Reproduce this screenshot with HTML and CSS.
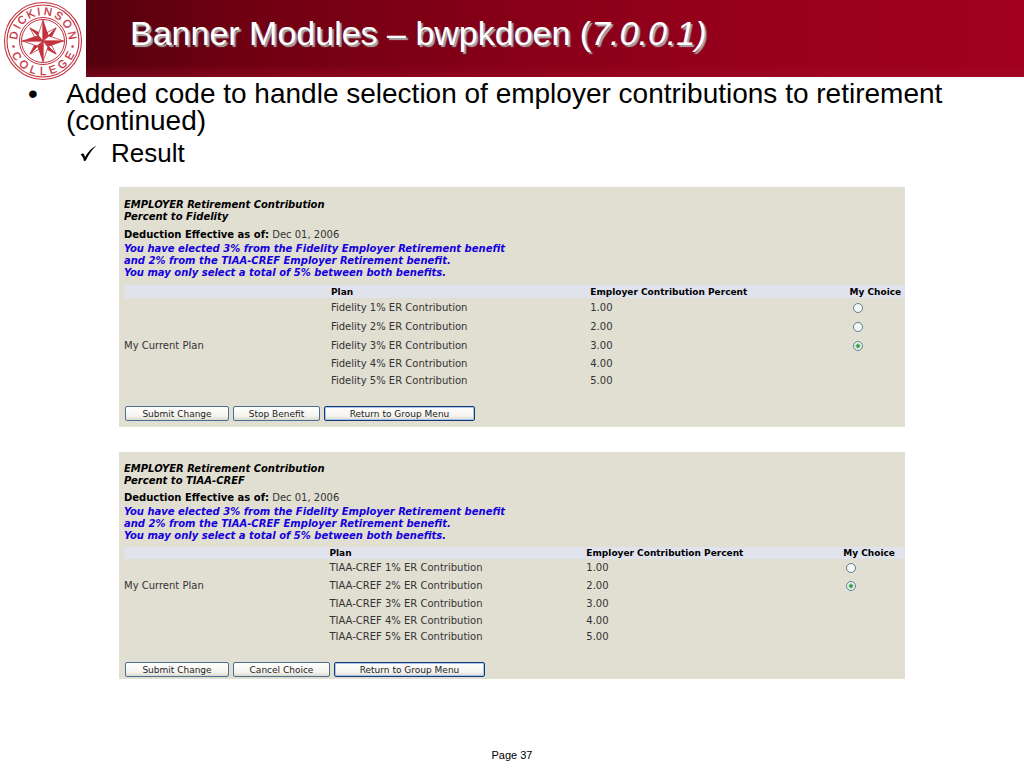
FILE: index.html
```html
<!DOCTYPE html>
<html lang="en">
<head>
<meta charset="utf-8">
<title>Banner Modules – bwpkdoen</title>
<link rel="stylesheet" href="styles.css">
</head>
<body>
<div class="slide">
  <header class="header">
    <div class="brand">
      <svg class="logo" viewBox="0 0 86 82" role="img" aria-label="Dickinson College">
        <defs>
          <g id="ray-long">
            <path d="M0 -20.500 L0 0 L-5 -6 Z" fill="#fff"/>
            <path d="M0 -20.500 L0 0 L5 -6 Z" fill="#c4303c"/>
          </g>
          <g id="ray-short">
            <path d="M0 -18.500 L0 0 L-4 -6 Z" fill="#fff"/>
            <path d="M0 -18.500 L0 0 L4 -6 Z" fill="#c4303c"/>
          </g>
        </defs>
        <g fill="none" stroke="#c4303c">
          <circle cx="43" cy="41" r="38.5" stroke-width="1.1"/>
          <circle cx="43" cy="41" r="36" stroke-width="1.1"/>
          <circle cx="43" cy="41" r="23.500" stroke-width="1"/>
          <circle cx="43" cy="41" r="21.500" stroke-width="1"/>
        </g>
        <g stroke="#c4303c" stroke-width=".8" stroke-linejoin="round" transform="translate(43 41)">
          <use href="#ray-short" transform="rotate(45)"/>
          <use href="#ray-short" transform="rotate(135)"/>
          <use href="#ray-short" transform="rotate(225)"/>
          <use href="#ray-short" transform="rotate(315)"/>
          <use href="#ray-long"/>
          <use href="#ray-long" transform="rotate(90)"/>
          <use href="#ray-long" transform="rotate(180)"/>
          <use href="#ray-long" transform="rotate(270)"/>
        </g>
        <g class="seal" transform="translate(43 41)">
          <text y="-26" transform="rotate(-79)">D</text>
          <text y="-26" transform="rotate(-61)">I</text>
          <text y="-26" transform="rotate(-45)">C</text>
          <text y="-26" transform="rotate(-25)">K</text>
          <text y="-26" transform="rotate(-8)">I</text>
          <text y="-26" transform="rotate(10)">N</text>
          <text y="-26" transform="rotate(32)">S</text>
          <text y="-26" transform="rotate(55)">O</text>
          <text y="-26" transform="rotate(79)">N</text>
          <text y="34" transform="rotate(60)">C</text>
          <text y="34" transform="rotate(39)">O</text>
          <text y="34" transform="rotate(19)">L</text>
          <text y="34" transform="rotate(0)">L</text>
          <text y="34" transform="rotate(-19)">E</text>
          <text y="34" transform="rotate(-40)">G</text>
          <text y="34" transform="rotate(-61)">E</text>
        </g>
        <circle cx="13.500" cy="46.500" r="1.200" fill="#c4303c"/>
        <circle cx="72.500" cy="46.500" r="1.200" fill="#c4303c"/>
      </svg>
    </div>
    <h1 class="title">Banner Modules – bwpkdoen (<em>7.0.0.1)</em></h1>
  </header>

  <main class="content">
    <ul class="points">
      <li class="point">
        <span class="bullet">•</span>
        <span>Added code to handle selection of employer contributions to retirement (continued)</span>
      </li>
      <li class="subpoint">
        <svg class="check" viewBox="0 0 17 17" aria-hidden="true"><path d="M.5 9.500 L3 8.300 Q4.500 9.500 5 12.200 Q9 4.500 16.500 .5 Q10 6.500 5.800 15.500 L4 16.200 Q3 11 .5 9.500 Z"/></svg>
        <span>Result</span>
      </li>
    </ul>

    <form class="panel">
      <h2 class="heading">EMPLOYER Retirement Contribution<br>Percent to Fidelity</h2>
      <p class="effective"><b>Deduction Effective as of:</b> Dec 01, 2006</p>
      <p class="note">You have elected 3% from the Fidelity Employer Retirement benefit<br>and 2% from the TIAA-CREF Employer Retirement benefit.<br>You may only select a total of 5% between both benefits.</p>
      <table class="plans">
        <colgroup><col class="col-current"><col class="col-plan"><col class="col-percent"><col></colgroup>
        <thead><tr><th></th><th>Plan</th><th>Employer Contribution Percent</th><th>My Choice</th></tr></thead>
        <tbody>
          <tr class="tall"><td></td><td>Fidelity 1% ER Contribution</td><td>1.00</td><td><input type="radio" name="fidelity" aria-label="Fidelity 1%"></td></tr>
          <tr class="tall"><td></td><td>Fidelity 2% ER Contribution</td><td>2.00</td><td><input type="radio" name="fidelity" aria-label="Fidelity 2%"></td></tr>
          <tr class="tall"><td>My Current Plan</td><td>Fidelity 3% ER Contribution</td><td>3.00</td><td><input type="radio" name="fidelity" aria-label="Fidelity 3%" checked></td></tr>
          <tr><td></td><td>Fidelity 4% ER Contribution</td><td>4.00</td><td></td></tr>
          <tr><td></td><td>Fidelity 5% ER Contribution</td><td>5.00</td><td></td></tr>
        </tbody>
      </table>
      <div class="actions">
        <button type="button" class="btn submit">Submit Change</button>
        <button type="button" class="btn stop">Stop Benefit</button>
        <button type="button" class="btn return">Return to Group Menu</button>
      </div>
    </form>

    <form class="panel compact">
      <h2 class="heading">EMPLOYER Retirement Contribution<br>Percent to TIAA-CREF</h2>
      <p class="effective"><b>Deduction Effective as of:</b> Dec 01, 2006</p>
      <p class="note">You have elected 3% from the Fidelity Employer Retirement benefit<br>and 2% from the TIAA-CREF Employer Retirement benefit.<br>You may only select a total of 5% between both benefits.</p>
      <table class="plans">
        <colgroup><col class="col-current"><col class="col-plan"><col class="col-percent"><col></colgroup>
        <thead><tr><th></th><th>Plan</th><th>Employer Contribution Percent</th><th>My Choice</th></tr></thead>
        <tbody>
          <tr class="tall"><td></td><td>TIAA-CREF 1% ER Contribution</td><td>1.00</td><td><input type="radio" name="tiaa" aria-label="TIAA-CREF 1%"></td></tr>
          <tr class="tall"><td>My Current Plan</td><td>TIAA-CREF 2% ER Contribution</td><td>2.00</td><td><input type="radio" name="tiaa" aria-label="TIAA-CREF 2%" checked></td></tr>
          <tr class="tall"><td></td><td>TIAA-CREF 3% ER Contribution</td><td>3.00</td><td></td></tr>
          <tr><td></td><td>TIAA-CREF 4% ER Contribution</td><td>4.00</td><td></td></tr>
          <tr><td></td><td>TIAA-CREF 5% ER Contribution</td><td>5.00</td><td></td></tr>
        </tbody>
      </table>
      <div class="actions">
        <button type="button" class="btn submit">Submit Change</button>
        <button type="button" class="btn cancel">Cancel Choice</button>
        <button type="button" class="btn return">Return to Group Menu</button>
      </div>
    </form>
  </main>

  <footer class="footer">Page 37</footer>
</div>
</body>
</html>
```
FILE: styles.css
```css
* { box-sizing: border-box; }

body {
  margin: 0;
  background: #fff;
  color: #000;
  font-family: "Liberation Sans", Arial, sans-serif;
}

.slide {
  display: flex;
  flex-direction: column;
  min-height: 100vh;
}

.header {
  display: flex;
  height: 77px;
}

.brand { flex: none; width: 86px; }

.logo { display: block; width: 86px; height: 82px; }

.seal {
  fill: #c4303c;
  stroke: #c4303c;
  stroke-width: .3px;
  font-family: "Liberation Sans", Arial, sans-serif;
  font-size: 11px;
  text-anchor: middle;
}

.title {
  flex: 1;
  margin: 0;
  padding: 13px 0 0 44px;
  background:
    linear-gradient(to bottom, transparent 64px, #a5122a66 77px),
    linear-gradient(to right, #54000e 0, #700012 160px, #8a0018 470px, #9c001c 750px, #a0001d 100%);
  color: #fff;
  font-size: 34px;
  font-weight: 400;
  line-height: 40px;
  text-shadow: 2px 2px 1px #aaa;
}

.content { flex: 1; }

.points {
  margin: 0;
  padding: 3px 28px 0;
  list-style: none;
}

.point {
  display: flex;
  font-size: 28px;
  line-height: 27px;
}

.bullet { flex: none; width: 38px; }

.subpoint {
  display: flex;
  align-items: center;
  gap: 14px;
  margin-top: 4px;
  padding-left: 52px;
  font-size: 26px;
  line-height: 30px;
}

.check { width: 17px; height: 17px; }

.panel {
  --tall-row: 19px;
  --short-row: 17px;
  --head-row: 13px;
  margin: 19px 119px 0;
  padding: 12px 0 6px 5px;
  background: #e1dfd2;
  color: #333;
  font-family: "DejaVu Sans", Verdana, sans-serif;
  font-size: 10px;
  line-height: 12px;
}

.heading {
  margin: 0 0 6px;
  color: #000;
  font-size: 10px;
  font-style: italic;
  line-height: 12px;
}

.effective { margin: 0 0 2px; }

.effective b { color: #000; }

.note {
  margin: 0 0 6px;
  color: #1400e0;
  font-style: italic;
  font-weight: 700;
}

.plans {
  width: 100%;
  table-layout: fixed;
  border-collapse: collapse;
}

.col-current { width: 26.5%; }
.col-plan, .col-percent { width: 33.2%; }

.plans th, .plans td {
  padding: 0;
  height: var(--short-row);
  line-height: 12px;
  text-align: left;
  vertical-align: middle;
  white-space: nowrap;
}

.plans th {
  height: var(--head-row);
  background: #e1e3ec;
  color: #000;
  font-size: 9px;
}

.plans .tall td { height: var(--tall-row); }

.plans input {
  display: block;
  appearance: none;
  width: 10px;
  height: 10px;
  margin: 0 0 0 3px;
  border: 1px solid #5c7f95;
  border-radius: 50%;
  background: #f5f8f5;
}

.plans input:checked {
  background: radial-gradient(circle, #2c9a48 0 1px, #eef5ec 3px);
}

.actions {
  display: flex;
  gap: 4px;
  margin: 17px 0 0 1px;
}

.btn {
  height: 15px;
  padding: 0;
  border: 1px solid #4a7091;
  border-radius: 2px;
  background: linear-gradient(#fff, #f4f3ee 70%, #dcd9cf);
  color: #222;
  font-family: inherit;
  font-size: 9px;
  line-height: 12px;
  white-space: nowrap;
}

.submit { width: 104px; }
.stop { width: 87px; }
.cancel { width: 97px; }

.return {
  width: 151px;
  border-color: #123c78;
  box-shadow: inset 0 0 0 1px #a9c3ea;
}

.compact {
  --tall-row: 18px;
  --short-row: 16px;
  --head-row: 12px;
  margin-top: 25px;
  padding: 11px 0 2px 5px;
}

.compact .heading { margin-bottom: 5px; }
.compact .note { margin-bottom: 5px; }
.compact .col-current { width: 26.3%; }
.compact .col-plan, .compact .col-percent { width: 32.9%; }

.footer {
  padding-bottom: 6px;
  font-size: 11px;
  line-height: 14px;
  text-align: center;
}
```
